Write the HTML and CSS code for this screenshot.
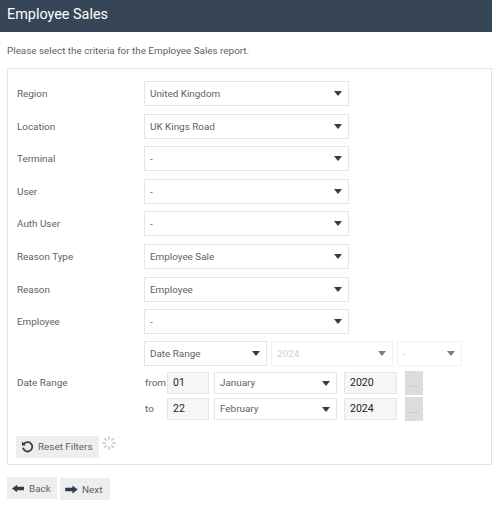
FILE: index.html
```html
<!DOCTYPE html>
<html lang="en">

<head>
  <meta charset="UTF-8">
  <title>Employee Sales</title>
  <link rel="stylesheet" href="styles.css">
</head>

<body>
  <header>Employee Sales</header>
  <p class="intro">Please select the criteria for the Employee Sales report.</p>

  <section class="panel">
    <div class="row"><label>Region</label><div class="select wide">United Kingdom<i class="arrow"></i></div></div>
    <div class="row"><label>Location</label><div class="select wide">UK Kings Road<i class="arrow"></i></div></div>
    <div class="row"><label>Terminal</label><div class="select wide">-<i class="arrow"></i></div></div>
    <div class="row"><label>User</label><div class="select wide">-<i class="arrow"></i></div></div>
    <div class="row"><label>Auth User</label><div class="select wide">-<i class="arrow"></i></div></div>
    <div class="row"><label>Reason Type</label><div class="select wide">Employee Sale<i class="arrow"></i></div></div>
    <div class="row"><label>Reason</label><div class="select wide">Employee<i class="arrow"></i></div></div>
    <div class="row"><label>Employee</label><div class="select wide">-<i class="arrow"></i></div></div>

    <div class="row range">
      <label>Date Range</label>
      <div class="range-body">
        <div class="range-top">
          <div class="select type">Date Range<i class="arrow"></i></div>
          <div class="select year off">2024<i class="arrow"></i></div>
          <div class="select dash off">-<i class="arrow"></i></div>
        </div>
        <div class="date-line">
          <span class="word">from</span>
          <div class="box day">01</div>
          <div class="select month">January<i class="arrow"></i></div>
          <div class="box yr">2020</div>
          <div class="pick">...</div>
        </div>
        <div class="date-line">
          <span class="word">to</span>
          <div class="box day">22</div>
          <div class="select month">February<i class="arrow"></i></div>
          <div class="box yr">2024</div>
          <div class="pick">...</div>
        </div>
      </div>
    </div>

    <div class="reset-line">
      <button class="btn reset">
        <svg width="13" height="13" viewBox="0 0 14 14"><path d="M3.2 4.2A5 5 0 1 1 2.2 8.4" fill="none" stroke="#2f3d4c" stroke-width="2"/><path d="M1 1.600V6h4.400z" fill="#2f3d4c"/></svg>
        <span>Reset Filters</span>
      </button>
      <svg class="spinner" width="14" height="14" viewBox="0 0 16 16">
        <g stroke="#c9ced2" stroke-width="2" stroke-linecap="round">
          <path d="M8 1v2.500"/><path d="M13 3l-1.800 1.800"/><path d="M15 8h-2.500"/><path d="M13 13l-1.800-1.800"/>
          <path d="M8 15v-2.500"/><path d="M3 13l1.800-1.800"/><path d="M1 8h2.500"/><path d="M3 3l1.800 1.800"/>
        </g>
      </svg>
    </div>
  </section>

  <nav>
    <button class="btn">
      <svg width="12" height="9" viewBox="0 0 14 10"><path d="M0 5l6-4.500V3h8v4H6v2.500z" fill="#2f3d4c"/></svg>
      <span>Back</span>
    </button>
    <button class="btn">
      <svg width="13" height="9" viewBox="0 0 14 10"><path d="M14 5L8 .5V3H0v4h8v2.500z" fill="#2f3d4c"/></svg>
      <span>Next</span>
    </button>
  </nav>
</body>

</html>
```

FILE: styles.css
```css
* {
  box-sizing: border-box;
  margin: 0;
  padding: 0;
}

body {
  font-family: Roboto, "Liberation Sans", Arial, sans-serif;
  font-size: 9.9px;
  color: #5c6269;
  background: #fff;
  overflow: hidden;
}

header {
  height: 32px;
  line-height: 29px;
  padding-left: 7px;
  background: #364657;
  color: #fff;
  font-size: 14.4px;
}

.intro {
  margin: 12px 0 0 7px;
  line-height: 13px;
}

.panel {
  margin: 11px 0 0 7px;
  height: 397px;
  padding: 12px 0 0 9px;
  border: 1px solid #e2e4e6;
}

.row {
  display: flex;
  align-items: center;
  height: 25px;
  margin-bottom: 7.6px;
}

.row label {
  width: 127px;
  flex: none;
}

.select,
.box {
  position: relative;
  display: flex;
  align-items: center;
  height: 25px;
  padding-left: 5px;
  background: #fff;
  border: 1px solid #e6e6e6;
}

.wide {
  width: 205px;
}

.arrow {
  position: absolute;
  right: 6px;
  top: 9px;
  border-left: 4.500px solid transparent;
  border-right: 4.500px solid transparent;
  border-top: 5.500px solid #2f3d4c;
}

.range {
  height: auto;
  margin-top: -1px;
  margin-bottom: 0;
}

.range-body {
  display: flex;
  flex-direction: column;
}

.range-top {
  display: flex;
  gap: 4px;
  margin-bottom: 6px;
}

.type {
  width: 123px;
}

.year {
  width: 122px;
}

.dash {
  width: 65px;
}

.off {
  color: #d0d2d4;
  border-color: #f0f2f4;
}

.off .arrow {
  border-top-color: #767f88;
}

.date-line {
  display: flex;
  align-items: center;
  gap: 5px;
  height: 22px;
  margin-bottom: 4px;
}

.date-line .select,
.date-line .box {
  height: 22px;
}

.date-line .arrow {
  top: 8px;
}

.word {
  width: 18px;
  padding-left: 1px;
}

.box {
  background: #f6f6f6;
  color: #222;
  font-size: 10.500px;
}

.day {
  width: 42px;
}

.month {
  width: 123px;
}

.yr {
  width: 53px;
  margin-left: 2px;
}

.pick {
  width: 18px;
  height: 24px;
  margin-left: 3px;
  background: #dcdcdc;
  color: #a0a0a0;
  text-align: center;
  line-height: 26px;
}

.reset-line {
  display: flex;
  align-items: flex-start;
  margin-top: 12px;
  gap: 3px;
}

.btn {
  display: flex;
  align-items: center;
  gap: 5px;
  width: 83px;
  height: 22px;
  padding: 0 5px;
  border: 0;
  background: #eeeeee;
  color: #5c6269;
  font-family: inherit;
  font-size: 9.900px;
  white-space: nowrap;
}

.reset {
  gap: 4px;
  margin-left: -1px;
}

nav {
  display: flex;
  gap: 3px;
  margin: 12px 0 0 7px;
}

nav .btn {
  width: 50px;
}

nav .btn + .btn {
  margin-top: 1px;
  gap: 4px;
}
```
